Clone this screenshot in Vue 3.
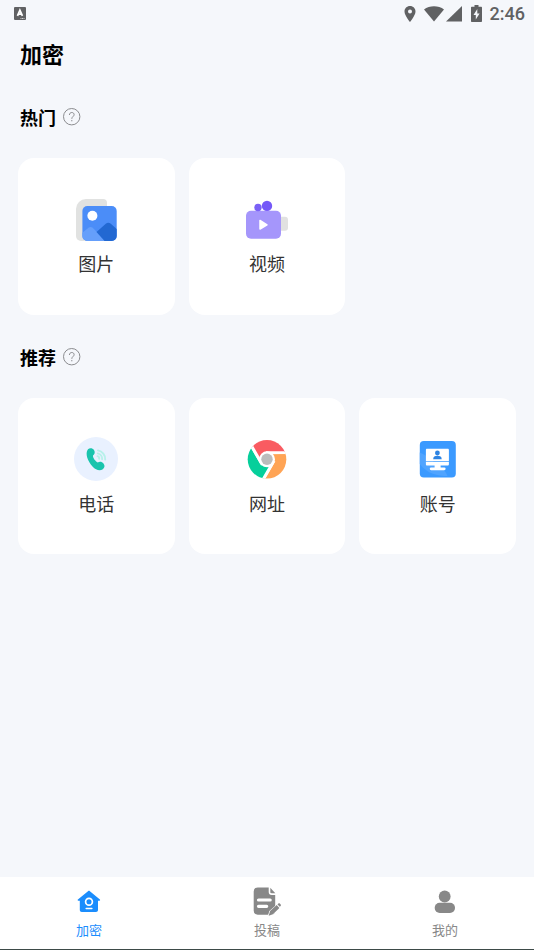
<script setup>
import { ref } from 'vue'

const sections = [
  { title: '热门', items: [{ id: 'image', label: '图片' }, { id: 'video', label: '视频' }] },
  {
    title: '推荐',
    items: [
      { id: 'phone', label: '电话' },
      { id: 'web', label: '网址' },
      { id: 'account', label: '账号' },
    ],
  },
]

const tabs = [
  { id: 'home', label: '加密' },
  { id: 'post', label: '投稿' },
  { id: 'mine', label: '我的' },
]
const active = ref('home')
</script>

<template>
  <div class="app">
    <div class="status">
      <svg class="status-input" width="12" height="13" viewBox="0 0 12 13">
        <rect width="12" height="13" rx="1" fill="#606163" />
        <path d="M3.500 8.800 5.900 3.200 8.400 8.800M4.400 7.200h3" fill="none" stroke="#fff" stroke-width="1.800" />
        <path d="M6.500 11.500h4" stroke="#d0d0d2" stroke-width="1" stroke-dasharray="1 .5" />
      </svg>
      <div class="status-right">
        <svg width="12" height="16" viewBox="0 0 12 16">
          <path fill="#606163" fill-rule="evenodd" d="M6 0C2.800 0 .5 2.400.5 5.500.5 9.600 6 16 6 16s5.500-6.400 5.500-10.500C11.500 2.400 9.200 0 6 0Zm0 3.500a2 2 0 1 1 0 4 2 2 0 0 1 0-4Z" />
        </svg>
        <svg class="wifi" width="20" height="16" viewBox="0 0 20 16">
          <path fill="#606163" d="M0 3.500C5.500-.700 14.500-.700 20 3.500L10 15.500Z" />
        </svg>
        <svg class="signal" width="16" height="16" viewBox="0 0 16 16"><path fill="#606163" d="M16 0v15.500H0Z" /></svg>
        <svg class="battery" width="11" height="17" viewBox="0 0 11 17">
          <path fill="#606163" fill-rule="evenodd" d="M3.500 0h4v1.700H10c.6 0 1 .4 1 1V16c0 .6-.4 1-1 1H1c-.6 0-1-.4-1-1V2.700c0-.6.4-1 1-1h2.500ZM6.300 4 2.500 10h2.300v4.500L8.600 8.500H6.300Z" />
        </svg>
        <span class="time">2:46</span>
      </div>
    </div>

    <main class="content">
      <h1 class="title">加密</h1>
      <section v-for="section in sections" :key="section.title" class="section">
        <div class="section-head">
          <h2>{{ section.title }}</h2>
          <button class="help" type="button" :aria-label="section.title">
            <svg width="18" height="18" viewBox="0 0 18 18" fill="none" stroke="#8b8c8f">
              <circle cx="8.700" cy="8.700" r="8.200" />
              <path d="M6.400 7c0-1.500 1-2.500 2.400-2.500s2.300.9 2.300 2.200c0 1.800-2.300 1.900-2.300 4.100M8.800 12v1.300" />
            </svg>
          </button>
        </div>
        <div class="grid">
          <button v-for="item in section.items" :key="item.id" class="card" type="button">
            <svg v-if="item.id === 'image'" class="card-icon" viewBox="0 0 44 44">
              <defs>
                <clipPath id="photo"><rect x="8.400" y="9" width="34.300" height="35" rx="5" /></clipPath>
              </defs>
              <path fill="#e1e2e1" d="M12 2h17a4 4 0 0 1 4 4v38H7a5 5 0 0 1-5-5V12A10 10 0 0 1 12 2Z" />
              <g clip-path="url(#photo)">
                <path fill="#4b8df8" d="M8 8h36v36H8z" />
                <path fill="#659ffb" d="m8 36 6.500-5.300c1.400-1 2.800-1 4.100 0L32 44H8Z" />
                <path fill="#2268d2" d="m22.500 35 9.300-8.300c1.600-1.300 3.400-1.300 5 0L44 33v11H30.500Z" />
              </g>
              <circle cx="18.400" cy="18.700" r="5" fill="#fff" />
            </svg>
            <svg v-else-if="item.id === 'video'" class="card-icon" viewBox="0 0 44 44">
              <rect x="32" y="19.700" width="11" height="14" rx="3" fill="#e1e1e1" />
              <rect x="1" y="13.700" width="35" height="28" rx="5" fill="#a596fb" />
              <circle cx="13" cy="10.500" r="3.700" fill="#7a61f6" />
              <circle cx="22" cy="8.900" r="5.200" fill="#7558f8" />
              <path d="M15 23.500v8.500l7-4.200Z" fill="#fff" stroke="#fff" stroke-width="1.500" stroke-linejoin="round" />
            </svg>
            <svg v-else-if="item.id === 'phone'" class="card-icon" viewBox="0 0 44 44">
              <circle cx="22" cy="22" r="22" fill="#e9f1ff" />
              <path fill="#19c4ad" d="M14 12.200c1.700-1.500 4.700-1.200 6 .8 1.500 2.500.5 4.500-1 5.500-.5 2 2.500 6 4.800 7 1.700-1.100 4.200-.9 5.700.9 1.800 2.200 1 4.400-.7 5.800-2.800 2.100-6.800 1.100-10.300-2.700C14 24.500 10.600 16.500 14 12.200Z" />
              <g fill="none" stroke="#b7f1ea" stroke-width="1.900" stroke-linecap="round">
                <path d="M24 13.400c4.200.8 7.600 4.700 7.200 9.200" />
                <path d="M23.800 16.400c2.700.6 4.600 3 4.300 5.800" />
                <path d="M23.500 19.200c1.200.3 1.800 1.300 1.700 2.600" />
              </g>
            </svg>
            <svg v-else-if="item.id === 'web'" class="card-icon" viewBox="0 0 44 44">
              <defs>
                <clipPath id="globe"><circle cx="22" cy="22.300" r="19.300" /></clipPath>
              </defs>
              <g clip-path="url(#globe)" stroke="#fff" stroke-width="3">
                <path fill="#ffa455" d="M22 15.600H50V50H13.800L27.800 25.600Z" />
                <path fill="#06cf9b" d="M22 15.600H50V50H13.800L27.800 25.600Z" transform="rotate(120 22 22.300)" />
                <path fill="#f95b61" d="M22 15.600H50V50H13.800L27.800 25.600Z" transform="rotate(240 22 22.300)" />
              </g>
              <circle cx="22" cy="22.300" r="8" fill="#fff" />
              <circle cx="22" cy="22.300" r="5.700" fill="#bcbcbc" />
            </svg>
            <svg v-else class="card-icon" viewBox="0 0 44 44">
              <rect x="3.800" y="4" width="36" height="36.500" rx="4" fill="#3b9aff" />
              <path fill="#50a4ff" d="M3.800 15.500C10 18 13 21 18 25c5 4 11 7 13.500 14-10 0-20-2-27.700-12Z" />
              <path fill="#fff" d="M11 11.800h20.700c.7 0 1.200.5 1.200 1.200v11.200h-23V13c0-.7.400-1.200 1.100-1.200ZM9.900 25h23v2.200c0 .8-.5 1.300-1.300 1.300h-7v2h3.700a1.300 1.300 0 0 1 0 2.700H15.100a1.300 1.300 0 0 1 0-2.700h3.500v-2h-7.500c-.7 0-1.200-.5-1.200-1.300Z" />
              <circle cx="21.400" cy="16" r="2.400" fill="#2d83e2" />
              <path fill="#2d83e2" d="M17.200 22.200c0-2.400 1.500-3.400 4.200-3.400s4.300 1 4.300 3.400Z" />
            </svg>
            <span>{{ item.label }}</span>
          </button>
        </div>
      </section>
    </main>

    <nav class="tabs">
      <button
        v-for="tab in tabs"
        :key="tab.id"
        type="button"
        class="tab"
        :class="{ active: active === tab.id }"
        @click="active = tab.id"
      >
        <svg v-if="tab.id === 'home'" class="tab-icon" viewBox="0 0 28 28">
          <path fill="currentColor" d="M13 4.200c.6-.5 1.300-.5 1.900 0l10 8.400c.5.500.2 1.200-.4 1.200H23V23c0 1.200-.8 2-2 2H6.800c-1.200 0-2-.8-2-2v-9.200H3.300c-.7 0-.9-.8-.4-1.200Z" />
          <circle cx="14" cy="14.700" r="3.400" fill="none" stroke="#fff" stroke-width="1.700" />
          <path d="M11.200 21.400h5.700" stroke="#fff" stroke-width="1.500" stroke-linecap="round" />
        </svg>
        <svg v-else-if="tab.id === 'post'" class="tab-icon" viewBox="0 0 28 28">
          <path fill="currentColor" d="M4.700.5H15.700V5c0 1.900 1.100 3 3 3h3.500v15.700a4 4 0 0 1-4 4H4.700a4 4 0 0 1-4-4V4.500a4 4 0 0 1 4-4Z" />
          <path fill="currentColor" d="M17.300.800 22.300 6.200h-3.800c-.8 0-1.200-.4-1.200-1.200Z" />
          <path d="M5.500 13h11.700M5.500 19.300h8.200" stroke="#fff" stroke-width="3.200" stroke-linecap="round" />
          <path d="m16 28.500 1.200-4 7.600-6.600 2 2.200-7.300 7Z" fill="#fff" stroke="#fff" stroke-width="2" />
          <path fill="currentColor" d="m15.700 28.700 1.400-4.600 6.600-6 2.700 3-6.500 6.100ZM24.500 17.400l.9-.8c.5-.4 1-.4 1.400 0l.9 1c.4.500.4 1-.1 1.400l-.8.800Z" />
        </svg>
        <svg v-else class="tab-icon" viewBox="0 0 28 28">
          <circle cx="13.700" cy="9.500" r="5.900" fill="currentColor" />
          <rect x="3.700" y="15.700" width="20.300" height="10.300" rx="5" fill="currentColor" />
        </svg>
        <span>{{ tab.label }}</span>
      </button>
    </nav>
  </div>
</template>

<style>
body {
  background: #f5f7fb;
}
</style>

<style scoped>
.app {
  box-sizing: border-box;
  display: flex;
  flex-direction: column;
  min-height: 100vh;
  background: #f5f7fb;
  color: #000;
  font-family: 'Noto Sans CJK SC', sans-serif;
}
button {
  margin: 0;
  padding: 0;
  border: 0;
  background: none;
  color: inherit;
  font: inherit;
  cursor: pointer;
}
svg {
  display: block;
  overflow: visible;
}
.status {
  display: flex;
  align-items: center;
  justify-content: space-between;
  height: 27px;
  padding: 0 9px 0 14px;
}
.status-right {
  display: flex;
  align-items: center;
}
.wifi {
  margin-left: 8px;
}
.signal {
  margin-left: 2px;
}
.battery {
  margin-left: 9px;
}
.time {
  margin-left: 8px;
  color: #606163;
  font: 500 18px/27px Roboto, sans-serif;
}
.content {
  flex: 1;
  padding: 10px 18px;
}
.title {
  margin: 0 2px 24px;
  font-size: 22px;
  font-weight: 700;
  line-height: 32px;
}
.section-head {
  display: flex;
  align-items: center;
  gap: 7px;
  height: 48px;
  margin-bottom: 17px;
  padding: 0 2px;
}
.section + .section {
  margin-top: 18px;
}
h2 {
  margin: 0;
  font-size: 18px;
  font-weight: 700;
  line-height: 24px;
}
.grid {
  display: grid;
  grid-template-columns: repeat(3, 1fr);
  gap: 14px;
}
.card {
  display: flex;
  flex-direction: column;
  align-items: center;
  justify-content: center;
  gap: 10px;
  padding-bottom: 1px;
  aspect-ratio: 1;
  border-radius: 16px;
  background: #fff;
  color: #333;
  font-size: 18px;
  line-height: 24px;
}
.card-icon {
  width: 44px;
  height: 44px;
}
.tabs {
  display: flex;
  padding: 10px 0;
  border-bottom: 1px solid #3d4a48;
  background: #fff;
}
.tab {
  display: flex;
  flex: 1;
  flex-direction: column;
  align-items: center;
  gap: 6px;
  color: #888;
  font-size: 13px;
  line-height: 18px;
}
.tab.active {
  color: #1b8dfd;
}
.tab-icon {
  width: 28px;
  height: 28px;
}
</style>
